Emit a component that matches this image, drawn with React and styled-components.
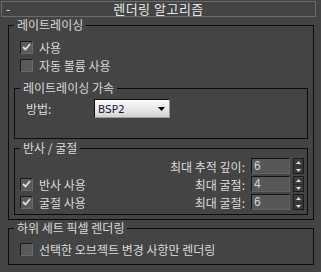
import styled, { createGlobalStyle } from 'styled-components';

const GlobalStyle = createGlobalStyle`
  * { box-sizing: border-box; }
  body {
    margin: 0;
    background: #444444;
  }
`;

const Panel = styled.div`
  width: 321px;
  height: 272px;
  padding-top: 1px;
  background: #444444;
  color: #dadada;
  font-family: "Noto Sans CJK KR", "Noto Sans", sans-serif;
  font-size: 12px;
  overflow: hidden;
`;

const TitleBar = styled.div`
  margin: 0 5px 0 1px;
  height: 16px;
  border: 1px solid #6c6c6c;
  display: grid;
  grid-template-columns: 1fr auto 1fr;
  align-items: center;
  line-height: 14px;
`;

const Collapse = styled.span`
  padding-left: 4px;
  color: #e6e6e6;
`;

const Title = styled.span`
  color: #e6e6e6;
  font-size: 13px;
  letter-spacing: 0.5px;
`;

const Group = styled.fieldset`
  margin: ${(p) => p.$margin};
  padding: 0;
  border: 1px solid #0c0c0c;
  min-width: 0;
`;

const Legend = styled.legend`
  margin-left: 5px;
  padding: 0 3px;
  line-height: 14px;
  color: #dadada;
`;

const CheckList = styled.div`
  padding: ${(p) => p.$pad};
  display: flex;
  flex-direction: column;
`;

const CheckRow = styled.label`
  display: flex;
  align-items: center;
  gap: 6px;
  height: 18px;
  white-space: nowrap;
`;

const Box = styled.span`
  width: 13px;
  height: 13px;
  flex: none;
  display: flex;
  align-items: center;
  justify-content: center;
  background: #5a5a5a;
  border: 1px solid;
  border-color: #1a1a1a #6a6a6a #6a6a6a #1a1a1a;
`;

const MethodRow = styled.div`
  display: grid;
  grid-template-columns: 68px 76px;
  align-items: center;
  padding: 4px 0 20px 11px;
`;

const Dropdown = styled.div`
  height: 19px;
  display: flex;
  align-items: center;
  justify-content: space-between;
  padding: 0 4px 0 3px;
  border: 1px solid;
  border-color: #0e0e0e #9a9a9a #9a9a9a #0e0e0e;
  background: linear-gradient(#fafafa, #e8e8e8 55%, #d2d2d2);
  color: #16164a;
  font-family: "DejaVu Sans", sans-serif;
  font-size: 10.5px;
`;

const SpinGrid = styled.div`
  display: grid;
  grid-template-columns: 1fr auto;
  grid-auto-rows: 18px;
  align-items: center;
  padding: 2px 3px 3px 5px;
`;

const SpinRow = styled.div`
  grid-column: 2;
  display: flex;
  align-items: center;
  justify-content: flex-end;
  white-space: nowrap;
`;

const SpinLabel = styled.span`
  margin-right: 6px;
`;

const SpinField = styled.div`
  width: 39px;
  height: 16px;
  padding-left: 2px;
  line-height: 14px;
  background: #575757;
  border: 1px solid;
  border-color: #141414 #626262 #626262 #141414;
  color: #d4d4d4;
  font-family: "Liberation Sans", sans-serif;
  font-size: 12px;
`;

const SpinButtons = styled.div`
  margin-left: 3px;
  width: 11px;
  height: 16px;
  display: grid;
  grid-template-rows: 1fr 1fr;
  background: #3c3c3c;
  border: 1px solid #1c1c1c;
`;

const Arrow = styled.span`
  display: flex;
  align-items: center;
  justify-content: center;
  border-top: ${(p) => (p.$down ? '1px solid #2a2a2a' : 'none')};
`;

function Check({ checked }) {
  return (
    <Box>
      {checked && (
        <svg width="9" height="8" viewBox="0 0 9 8">
          <path d="M1 4 L3.5 6.5 L8 1" fill="none" stroke="#e0e0e0" strokeWidth="1.8" />
        </svg>
      )}
    </Box>
  );
}

function Spinner({ label, value, row }) {
  return (
    <SpinRow style={{ gridRow: row }}>
      <SpinLabel>{label}</SpinLabel>
      <SpinField>{value}</SpinField>
      <SpinButtons>
        <Arrow>
          <svg width="5" height="3" viewBox="0 0 5 3"><path d="M2.5 0 L5 3 L0 3 Z" fill="#dcdcdc" /></svg>
        </Arrow>
        <Arrow $down>
          <svg width="5" height="3" viewBox="0 0 5 3"><path d="M0 0 L5 0 L2.5 3 Z" fill="#dcdcdc" /></svg>
        </Arrow>
      </SpinButtons>
    </SpinRow>
  );
}

export default function App() {
  return (
    <>
      <GlobalStyle />
      <Panel>
        <TitleBar>
          <Collapse>-</Collapse>
          <Title>렌더링 알고리즘</Title>
          <span />
        </TitleBar>

        <Group $margin="1px 7px 0 8px">
          <Legend>레이트레이싱</Legend>
          <CheckList $pad="6px 0 0 11px">
            <CheckRow><Check checked />사용</CheckRow>
            <CheckRow><Check />자동 볼륨 사용</CheckRow>
          </CheckList>

          <Group $margin="7px 5px 0">
            <Legend>레이트레이싱 가속</Legend>
            <MethodRow>
              <span>방법:</span>
              <Dropdown>
                <span>BSP2</span>
                <svg width="7" height="4" viewBox="0 0 7 4"><path d="M0 0 L7 0 L3.5 4 Z" fill="#000" /></svg>
              </Dropdown>
            </MethodRow>
          </Group>

          <Group $margin="2px 5px 4px">
            <Legend>반사 / 굴절</Legend>
            <SpinGrid>
              <Spinner label="최대 추적 깊이:" value="6" row={1} />
              <CheckRow style={{ gridRow: 2 }}><Check checked />반사 사용</CheckRow>
              <Spinner label="최대 굴절:" value="4" row={2} />
              <CheckRow style={{ gridRow: 3 }}><Check checked />굴절 사용</CheckRow>
              <Spinner label="최대 굴절:" value="6" row={3} />
            </SpinGrid>
          </Group>
        </Group>

        <Group $margin="1px 7px 0 8px">
          <Legend>하위 세트 픽셀 렌더링</Legend>
          <CheckList $pad="5px 0 6px 11px">
            <CheckRow><Check />선택한 오브젝트 변경 사항만 렌더링</CheckRow>
          </CheckList>
        </Group>
      </Panel>
    </>
  );
}
